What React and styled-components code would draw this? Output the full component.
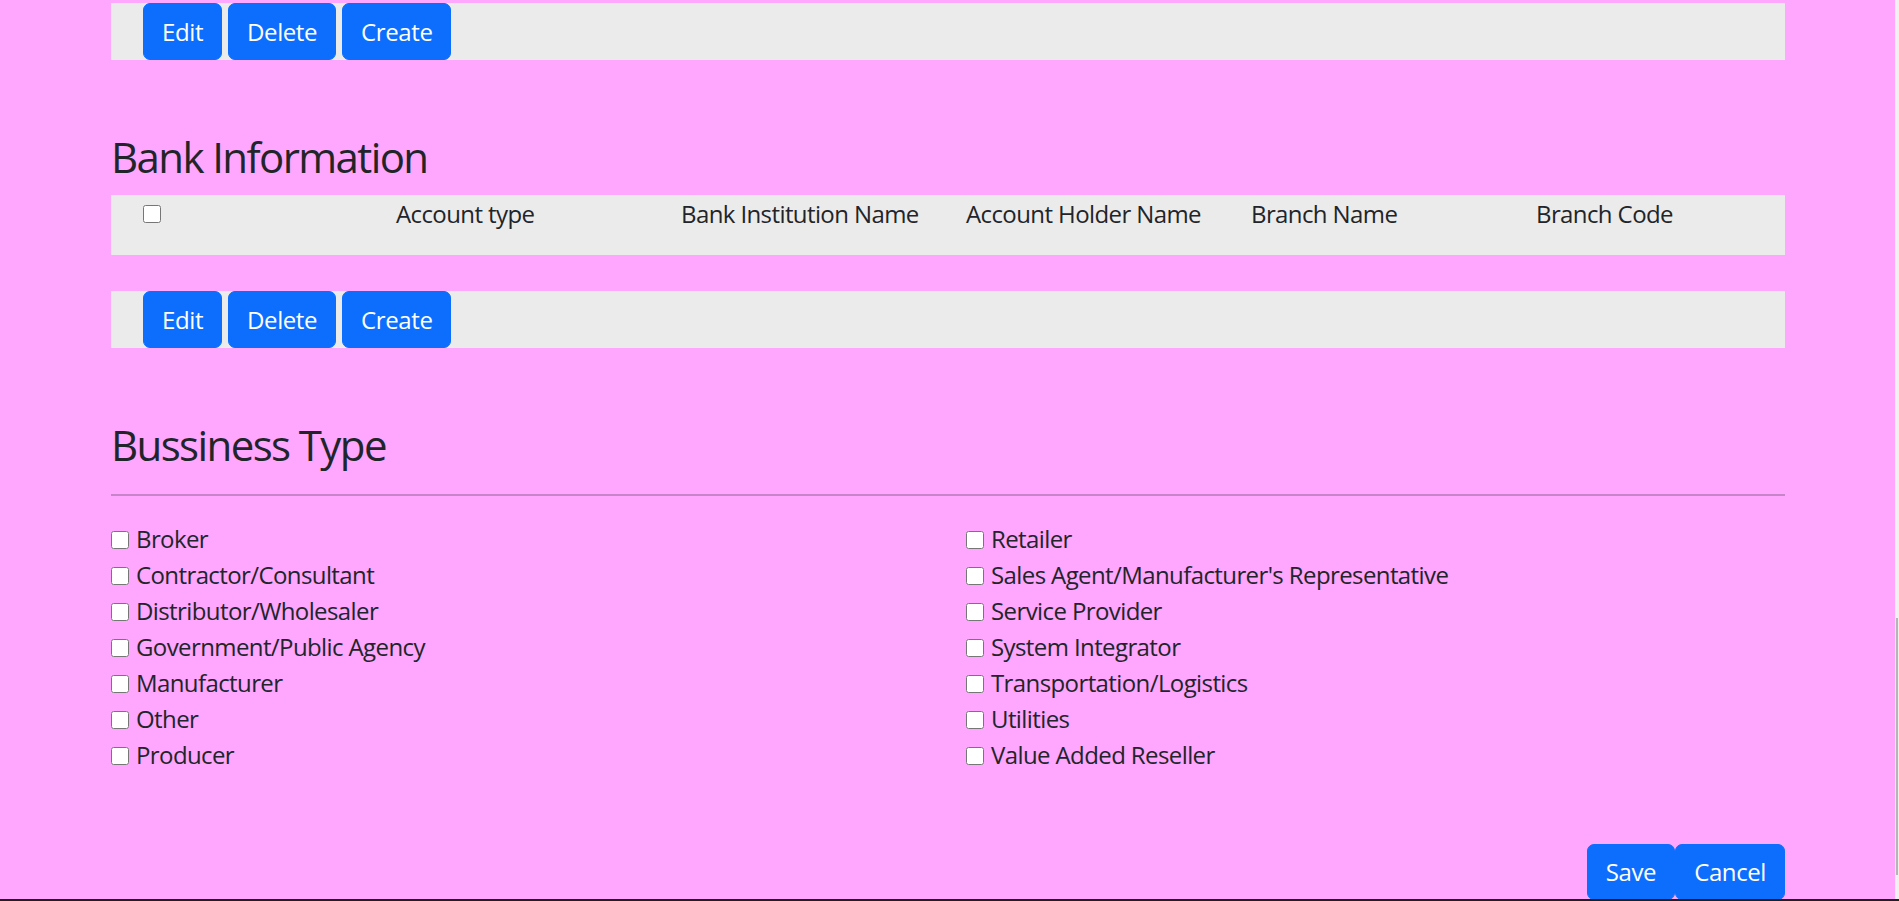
import React from 'react';
import styled, { createGlobalStyle } from 'styled-components';

const GlobalStyle = createGlobalStyle`
  html, body {
    margin: 0;
    height: 100%;
    overflow: hidden;
    background-color: #ffa6ff;
  }
  body {
    font-family: "Open Sans", "Noto Sans", sans-serif;
    font-size: 24px;
    line-height: 36px;
    letter-spacing: -0.6px;
    color: #212529;
  }
`;

const Page = styled.div`
  width: 1674px;
  margin-left: 111px;
  padding-top: 3px;
`;

const ButtonBar = styled.div`
  display: flex;
  gap: 6px;
  height: 57px;
  padding-left: 32px;
  background-color: #ebebeb;
`;

const Button = styled.button`
  font-family: inherit;
  font-size: 24px;
  line-height: 36px;
  letter-spacing: -0.4px;
  color: #ffffff;
  background-color: #0d6efd;
  border: 1.5px solid #0d6efd;
  border-radius: 7px;
  padding: 9px 18px;
  cursor: pointer;
`;

const Heading = styled.h3`
  font-size: 42px;
  line-height: 50px;
  font-weight: 400;
  letter-spacing: -1.6px;
  margin: 72px 0 13px;
`;

const TableHead = styled.div`
  display: grid;
  grid-template-columns: repeat(5, 285px) 1fr;
  height: 59px;
  padding-top: 1px;
  background-color: #ebebeb;
  margin-bottom: 36px;
`;

const HeadCell = styled.div`
  white-space: nowrap;
`;

const Check = styled.input.attrs({ type: 'checkbox' })`
  width: 18px;
  height: 18px;
  margin: ${(p) => (p.$head ? '8px 0 0 32px' : '1px 0 0')};
  flex-shrink: 0;
`;

const Rule = styled.hr`
  border: 0;
  border-top: 2px solid rgba(33, 37, 41, 0.25);
  margin: 24px 0 25px;
`;

const TypeGrid = styled.div`
  display: grid;
  grid-template-columns: 1fr 1fr;
  column-gap: 36px;
`;

const TypeColumn = styled.div`
  display: flex;
  flex-direction: column;
`;

const TypeItem = styled.label`
  display: flex;
  align-items: center;
  gap: 7px;
  height: 36px;
  white-space: nowrap;
`;

const Footer = styled.div`
  display: flex;
  justify-content: flex-end;
  margin-top: 71px;
`;

const ScrollTrack = styled.div`
  position: fixed;
  top: 0;
  right: 0;
  width: 4px;
  height: 100%;
  background-color: #f1f1f1;
`;

const ScrollThumb = styled.div`
  position: absolute;
  top: 618px;
  left: 1px;
  width: 2px;
  height: 257px;
  background-color: #b5b5b5;
`;

const BottomEdge = styled.div`
  position: fixed;
  left: 0;
  bottom: 0;
  width: 100%;
  height: 2px;
  background-color: #1f1f1f;
`;

const columns = [
  'Account type',
  'Bank Institution Name',
  'Account Holder Name',
  'Branch Name',
  'Branch Code',
];

const leftTypes = [
  'Broker',
  'Contractor/Consultant',
  'Distributor/Wholesaler',
  'Government/Public Agency',
  'Manufacturer',
  'Other',
  'Producer',
];

const rightTypes = [
  'Retailer',
  "Sales Agent/Manufacturer's Representative",
  'Service Provider',
  'System Integrator',
  'Transportation/Logistics',
  'Utilities',
  'Value Added Reseller',
];

const Actions = () => (
  <ButtonBar>
    <Button>Edit</Button>
    <Button>Delete</Button>
    <Button>Create</Button>
  </ButtonBar>
);

const App = () => {
  return (
    <>
      <GlobalStyle />
      <Page>
        <Actions />

        <Heading>Bank Information</Heading>
        <TableHead>
          <HeadCell>
            <Check $head />
          </HeadCell>
          {columns.map((c) => (
            <HeadCell key={c}>{c}</HeadCell>
          ))}
        </TableHead>
        <Actions />

        <Heading>Bussiness Type</Heading>
        <Rule />
        <TypeGrid>
          {[leftTypes, rightTypes].map((list, i) => (
            <TypeColumn key={i}>
              {list.map((t) => (
                <TypeItem key={t}>
                  <Check />
                  {t}
                </TypeItem>
              ))}
            </TypeColumn>
          ))}
        </TypeGrid>

        <Footer>
          <Button>Save</Button>
          <Button>Cancel</Button>
        </Footer>
      </Page>
      <ScrollTrack>
        <ScrollThumb />
      </ScrollTrack>
      <BottomEdge />
    </>
  );
};

export default App;
